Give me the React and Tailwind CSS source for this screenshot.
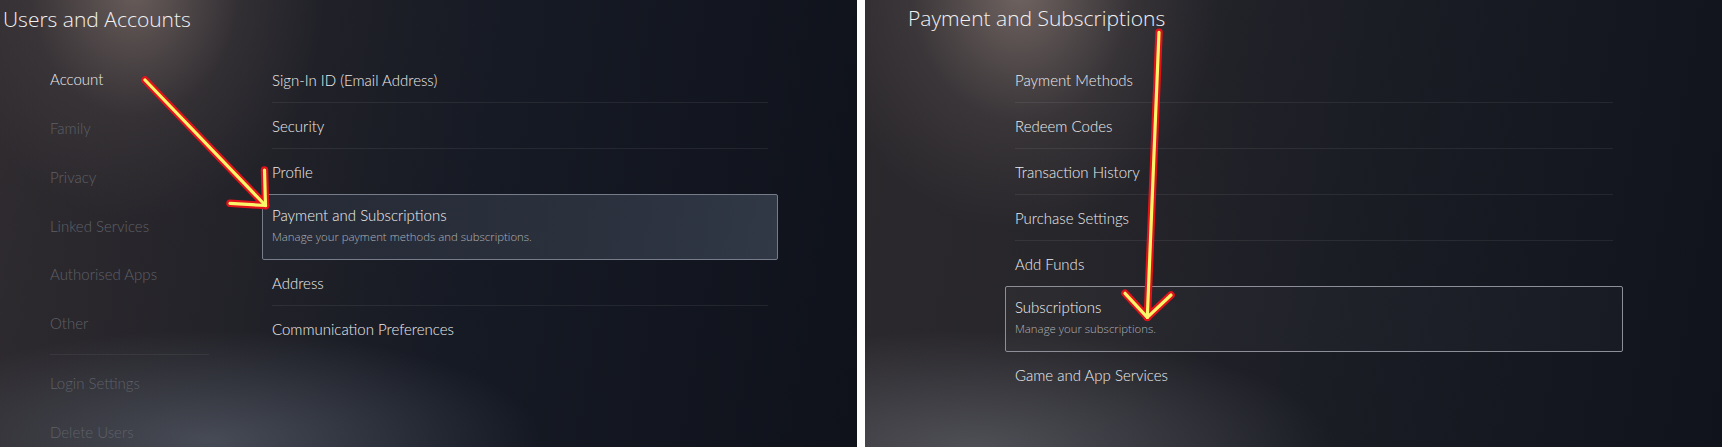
import React from "react";

const openSans = { fontFamily: '"Open Sans", "Noto Sans", sans-serif' };
const lato = { fontFamily: 'Lato, "Open Sans", sans-serif' };

function Arrow({ lines }) {
  return (
    <svg className="pointer-events-none absolute left-0 top-0" width="857" height="447" viewBox="0 0 857 447">
      {lines.map((l, i) => (
        <line key={"r" + i} x1={l[0]} y1={l[1]} x2={l[2]} y2={l[3]} stroke="#e0121c" strokeWidth="7.5" strokeLinecap="round" />
      ))}
      {lines.map((l, i) => (
        <line key={"y" + i} x1={l[0]} y1={l[1]} x2={l[2]} y2={l[3]} stroke="#fbf56a" strokeWidth="3.2" strokeLinecap="round" />
      ))}
    </svg>
  );
}

function Item({ label, divider }) {
  return (
    <div
      className={"flex h-[46px] items-center text-[15px] font-light leading-[20px] text-[#ececee] " + (divider ? "border-b border-white/[0.07]" : "")}
      style={lato}
    >
      {label}
    </div>
  );
}

function Selected({ label, desc, variant }) {
  return (
    <div
      className={
        "-mx-[10px] -mt-px h-[66px] rounded-[2px] border px-[9px] pt-[10px] " +
        (variant === "blue"
          ? "border-[#767c8a] bg-[linear-gradient(100deg,#262b36_0%,#2a303c_60%,#313846_100%)]"
          : "border-[#8d8e98] bg-white/[0.025]")
      }
    >
      <div className="text-[15px] font-light leading-[20px] text-[#f0f0f2]" style={lato}>{label}</div>
      <div className="mt-[4px] text-[11.4px] font-light leading-[16px] text-[#b0b1b6]" style={openSans}>{desc}</div>
    </div>
  );
}

function SideItem({ label, active }) {
  return (
    <div
      className={"flex h-[48.75px] items-center text-[15px] font-light leading-[20px] " + (active ? "text-[#ececee]" : "text-[#5e6067]")}
      style={lato}
    >
      {label}
    </div>
  );
}

export default function App() {
  return (
    <div className="flex h-[447px] w-[1722px] gap-[8px] bg-white" style={openSans}>
      {/* Left panel */}
      <div className="relative h-[447px] w-[857px] shrink-0 overflow-hidden bg-[radial-gradient(ellipse_190px_230px_at_135px_-10px,rgba(125,110,105,0.75),rgba(90,80,80,0.25)_55%,transparent_100%),radial-gradient(ellipse_330px_110px_at_210px_440px,rgba(95,102,115,0.6),transparent_100%),linear-gradient(100deg,#302c30_0%,#25242a_25%,#161a24_55%,#0f121b_100%)]">
        <h1 className="pl-[3px] pt-[6px] text-[21px] font-light leading-[26px] text-[#f2f2f2]">Users and Accounts</h1>
        <div className="mt-[23px] flex">
          <div className="ml-[50px] w-[159px]">
            <SideItem label="Account" active />
            <SideItem label="Family" />
            <SideItem label="Privacy" />
            <SideItem label="Linked Services" />
            <SideItem label="Authorised Apps" />
            <SideItem label="Other" />
            <div className="mb-[4px] mt-[6.5px] h-px bg-white/[0.06]" />
            <SideItem label="Login Settings" />
            <SideItem label="Delete Users" />
          </div>
          <div className="ml-[63px] w-[496px] pt-[2px]">
            <Item label="Sign-In ID (Email Address)" divider />
            <Item label="Security" divider />
            <Item label="Profile" />
            <Selected label="Payment and Subscriptions" desc="Manage your payment methods and subscriptions." variant="blue" />
            <Item label="Address" divider />
            <Item label="Communication Preferences" />
          </div>
        </div>
        <Arrow
          lines={[
            [145, 80, 265.5, 205.5],
            [264.5, 170, 265.5, 205.5],
            [230, 203.3, 265.5, 205.5],
          ]}
        />
      </div>

      {/* Right panel */}
      <div className="relative h-[447px] w-[857px] shrink-0 overflow-hidden bg-[radial-gradient(ellipse_200px_240px_at_155px_-10px,rgba(130,115,110,0.8),rgba(95,85,85,0.3)_55%,transparent_100%),radial-gradient(ellipse_360px_120px_at_110px_450px,rgba(100,102,110,0.65),transparent_100%),linear-gradient(100deg,#2c292d_0%,#27262b_25%,#1b1d25_55%,#10131c_100%)]">
        <h1 className="pl-[43px] pt-[5px] text-[21px] font-light leading-[26px] text-[#f2f2f2]">Payment and Subscriptions</h1>
        <div className="ml-[150px] mt-[24px] w-[598px] pt-[2px]">
          <Item label="Payment Methods" divider />
          <Item label="Redeem Codes" divider />
          <Item label="Transaction History" divider />
          <Item label="Purchase Settings" divider />
          <Item label="Add Funds" />
          <Selected label="Subscriptions" desc="Manage your subscriptions." />
          <Item label="Game and App Services" />
        </div>
        <Arrow
          lines={[
            [294, 32.3, 282.3, 317.3],
            [260, 293.3, 282.3, 317.3],
            [306, 295, 282.3, 317.3],
          ]}
        />
      </div>
    </div>
  );
}
